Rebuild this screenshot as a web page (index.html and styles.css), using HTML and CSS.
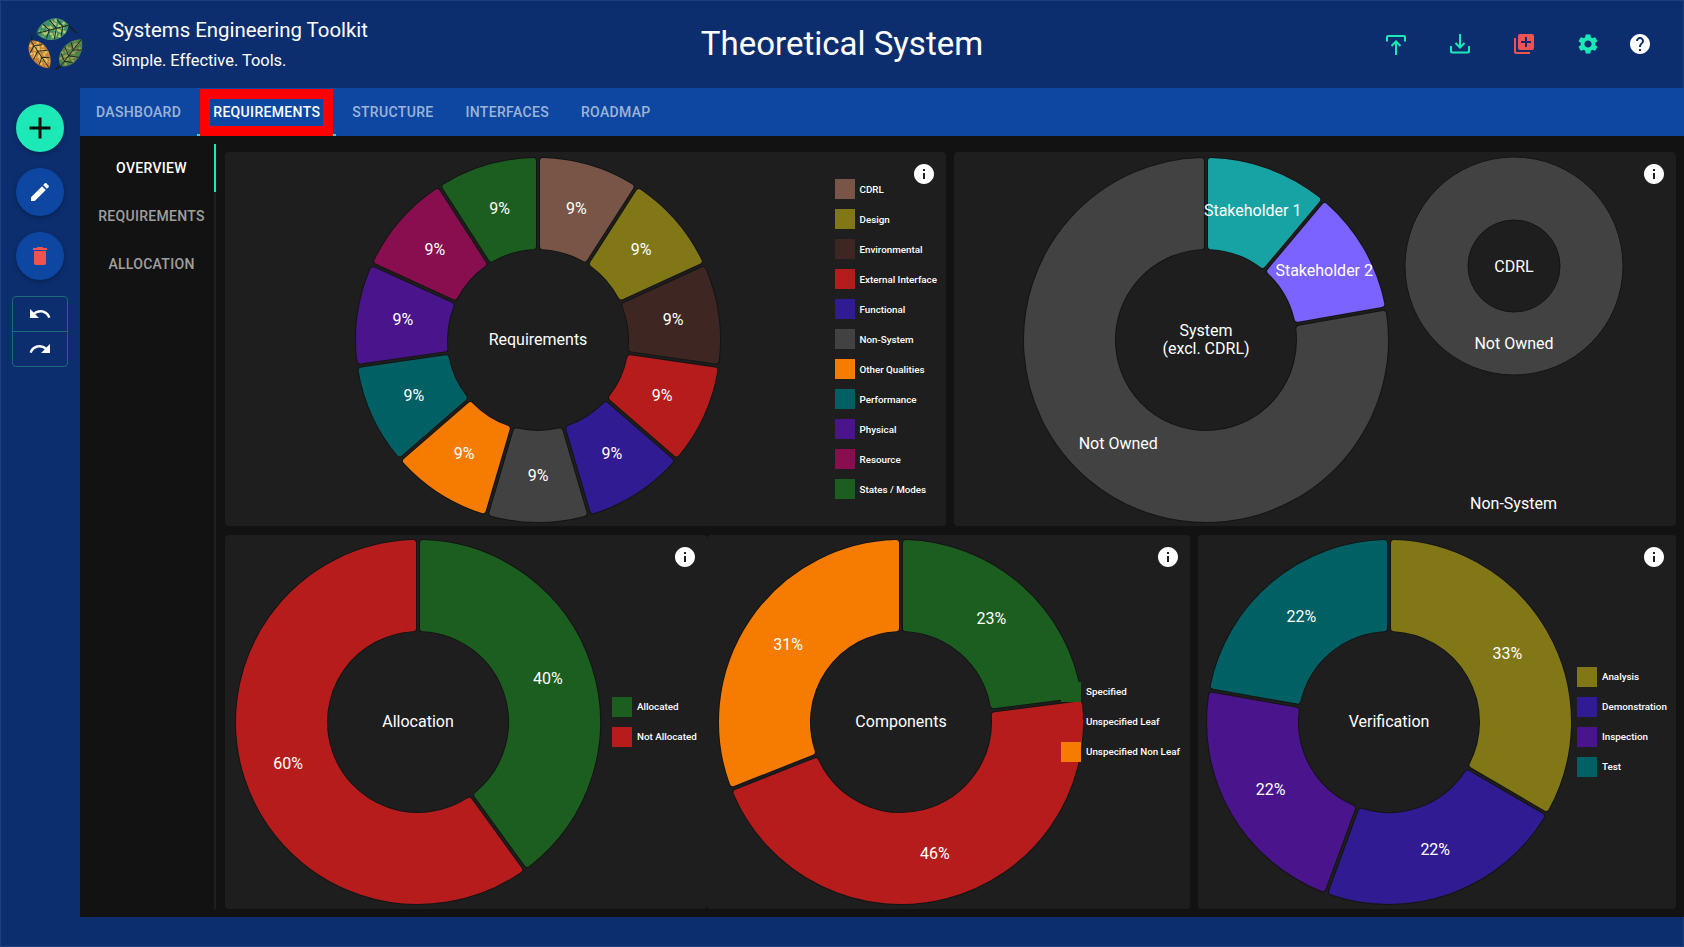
FILE: index.html
```html
<!DOCTYPE html>
<html lang="en">
<head>
  <meta charset="UTF-8" />
  <meta name="viewport" content="width=device-width, initial-scale=1.0" />
  <title>Systems Engineering Toolkit</title>
  <link rel="stylesheet" href="styles.css">
</head>
<body>
<div class="app">

  <header class="top-bar">
    <div class="brand">
      <svg class="logo" viewBox="0 0 270 210" aria-hidden="true">
        <defs>
          <path id="leaf-shape" d="M0 0C16 -42 74 -44 100 0C74 42 16 42 0 0Z" />
          <g id="leaf-detail" fill="none">
            <path d="M14 -18L78 16M30 -26L90 4M10 12L62 -28M30 26L84 -14M16 -6L50 24" stroke="currentColor" stroke-width="8" stroke-dasharray="8 5" />
            <path d="M0 0H100M18 0L30 -26M38 0L52 -30M60 0L74 -22M18 0L30 26M38 0L52 30M60 0L74 22" stroke="#1d2a1c" stroke-width="3" />
          </g>
        </defs>
        <g class="leaf-top">
          <path class="stem" d="M175 45L200 70" />
          <g transform="translate(176 46) rotate(166)">
            <use href="#leaf-shape" />
            <use href="#leaf-detail" />
          </g>
        </g>
        <g class="leaf-left">
          <path class="stem" d="M65 76L65 96" />
          <g transform="translate(62 92) rotate(56) scale(1 .85)">
            <use href="#leaf-shape" />
            <use href="#leaf-detail" />
          </g>
        </g>
        <g class="leaf-right">
          <path class="stem" d="M158 164L136 178" />
          <g transform="translate(152 168) rotate(-52) scale(1.02 .85)">
            <use href="#leaf-shape" />
            <use href="#leaf-detail" />
          </g>
        </g>
      </svg>
      <div class="brand-text">
        <div class="brand-name">Systems Engineering Toolkit</div>
        <div class="brand-tag">Simple. Effective. Tools.</div>
      </div>
    </div>

    <h1 class="page-title">Theoretical System</h1>

    <div class="top-actions">
      <svg class="icon" viewBox="0 0 24 24"><path class="line-teal" d="M3 9.5V5a1 1 0 0 1 1-1h16a1 1 0 0 1 1 1v4.500M12 23V10M7.500 14L12 9.500L16.500 14" /></svg>
      <svg class="icon" viewBox="0 0 24 24"><path class="line-teal" d="M3 14v5.500a1 1 0 0 0 1 1h16a1 1 0 0 0 1-1V14M12 2v13M7.500 11L12 15.500L16.500 11" /></svg>
      <svg class="icon icon-red" viewBox="0 0 24 24"><path d="M4 6H2v14c0 1.100.9 2 2 2h14v-2H4V6zm16-4H8c-1.100 0-2 .9-2 2v12c0 1.100.9 2 2 2h12c1.100 0 2-.9 2-2V4c0-1.100-.9-2-2-2zm-1 9h-4v4h-2v-4H9V9h4V5h2v4h4v2z" /></svg>
      <svg class="icon icon-teal" viewBox="0 0 24 24"><path d="M19.140 12.940c.04-.3.06-.61.06-.94 0-.32-.02-.64-.07-.94l2.030-1.580c.18-.14.23-.41.12-.61l-1.920-3.320c-.12-.22-.37-.29-.59-.22l-2.390.96c-.5-.38-1.030-.7-1.620-.94l-.36-2.540c-.04-.24-.24-.41-.48-.41h-3.840c-.24 0-.43.17-.47.41l-.36 2.540c-.59.24-1.130.57-1.620.94l-2.390-.96c-.22-.08-.47 0-.59.22L2.740 8.870c-.12.21-.08.47.12.61l2.030 1.580c-.05.3-.09.63-.09.94s.02.64.07.94l-2.030 1.580c-.18.14-.23.41-.12.61l1.920 3.320c.12.22.37.29.59.22l2.390-.96c.5.38 1.030.7 1.620.94l.36 2.540c.05.24.24.41.48.41h3.840c.24 0 .44-.17.47-.41l.36-2.540c.59-.24 1.130-.56 1.620-.94l2.390.96c.22.08.47 0 .59-.22l1.920-3.320c.12-.22.07-.47-.12-.61l-2.010-1.580zM12 15.600c-1.980 0-3.600-1.620-3.600-3.600s1.620-3.600 3.600-3.600 3.600 1.620 3.600 3.600-1.620 3.600-3.600 3.600z" /></svg>
      <svg class="icon icon-white help" viewBox="0 0 24 24"><path d="M12 2C6.480 2 2 6.480 2 12s4.480 10 10 10 10-4.480 10-10S17.520 2 12 2zm1 17h-2v-2h2v2zm2.070-7.750l-.9.920C13.450 12.900 13 13.500 13 15h-2v-.5c0-1.100.45-2.100 1.170-2.830l1.240-1.260c.37-.36.59-.86.59-1.410 0-1.100-.9-2-2-2s-2 .9-2 2H8c0-2.210 1.790-4 4-4s4 1.790 4 4c0 .88-.36 1.680-.93 2.250z" /></svg>
    </div>
  </header>

  <div class="workspace">
    <nav class="rail">
      <button class="fab fab-add"><svg viewBox="0 0 24 24"><path d="M19 13h-6v6h-2v-6H5v-2h6V5h2v6h6v2z" /></svg></button>
      <button class="fab"><svg class="icon icon-white" viewBox="0 0 24 24"><path d="M3 17.250V21h3.750L17.810 9.940l-3.750-3.750L3 17.250zM20.710 7.040c.39-.39.39-1.020 0-1.410l-2.340-2.340c-.39-.39-1.020-.39-1.410 0l-1.830 1.830 3.750 3.750 1.830-1.830z" /></svg></button>
      <button class="fab"><svg class="icon icon-red" viewBox="0 0 24 24"><path d="M6 19c0 1.100.9 2 2 2h8c1.100 0 2-.9 2-2V7H6v12zM19 4h-3.500l-1-1h-5l-1 1H5v2h14V4z" /></svg></button>
      <div class="history">
        <button><svg class="icon icon-white" viewBox="0 0 24 24"><path d="M12.500 8c-2.650 0-5.050.99-6.900 2.600L2 7v9h9l-3.620-3.620c1.390-1.160 3.160-1.880 5.120-1.880 3.540 0 6.550 2.310 7.600 5.500l2.370-.78C21.080 11.030 17.150 8 12.500 8z" /></svg></button>
        <button><svg class="icon icon-white" viewBox="0 0 24 24"><path d="M18.400 10.600C16.550 8.990 14.150 8 11.500 8c-4.650 0-8.580 3.030-9.960 7.220L3.900 16c1.050-3.190 4.050-5.500 7.600-5.500 1.950 0 3.730.72 5.120 1.880L13 16h9V7l-3.600 3.600z" /></svg></button>
      </div>
    </nav>

    <main class="content">
      <div class="tabs">
        <a class="tab">Dashboard</a>
        <a class="tab tab-active">Requirements</a>
        <a class="tab">Structure</a>
        <a class="tab">Interfaces</a>
        <a class="tab">Roadmap</a>
      </div>

      <div class="panel">
        <div class="side-tabs">
          <a class="side-tab side-tab-active">Overview</a>
          <a class="side-tab">Requirements</a>
          <a class="side-tab">Allocation</a>
        </div>

        <div class="charts">
          <div class="chart-row row-top">
            <section class="card card-requirements">
              <div class="donut" data-chart="requirements"></div>
              <div class="legend" data-legend="requirements"></div>
              <svg class="info" viewBox="0 0 24 24"><use href="#info-glyph" /></svg>
            </section>

            <section class="card card-ownership">
              <div class="donut" data-chart="system"></div>
              <div class="non-system">
                <div class="donut donut-small" data-chart="cdrl"></div>
                <div class="non-system-label">Non-System</div>
              </div>
              <svg class="info" viewBox="0 0 24 24"><use href="#info-glyph" /></svg>
            </section>
          </div>

          <div class="chart-row row-bottom">
            <section class="card card-allocation">
              <div class="donut" data-chart="allocation"></div>
              <div class="legend" data-legend="allocation"></div>
              <svg class="info" viewBox="0 0 24 24"><use href="#info-glyph" /></svg>
            </section>

            <section class="card card-components">
              <div class="donut" data-chart="components"></div>
              <div class="legend" data-legend="components"></div>
              <svg class="info" viewBox="0 0 24 24"><use href="#info-glyph" /></svg>
            </section>

            <section class="card card-verification">
              <div class="donut" data-chart="verification"></div>
              <div class="legend" data-legend="verification"></div>
              <svg class="info" viewBox="0 0 24 24"><use href="#info-glyph" /></svg>
            </section>
          </div>
        </div>
      </div>
    </main>
  </div>

  <svg class="glyphs" aria-hidden="true">
    <defs>
      <path id="info-glyph" d="M12 2C6.480 2 2 6.480 2 12s4.480 10 10 10 10-4.480 10-10S17.520 2 12 2zm1 15h-2v-6h2v6zm0-8h-2V7h2v2z" />
    </defs>
  </svg>
</div>

<script src="charts.js"></script>
</body>
</html>
```

FILE: styles.css
```css
* {
  box-sizing: border-box;
}

html, body {
  margin: 0;
  height: 100%;
  overflow: hidden;
}

body {
  font-family: Roboto, "Liberation Sans", sans-serif;
  color: #fff;
  background: #0c2e6e;
}

.app {
  height: 947px;
  box-shadow: inset 0 0 0 1px #1c3f80;
}

.glyphs {
  display: none;
}

.icon {
  display: block;
  width: 24px;
  height: 24px;
}

.icon-white { fill: #fff; }
.icon-red { fill: #ef5350; }
.icon-teal { fill: #1de9b6; }

.line-teal {
  fill: none;
  stroke: #1de9b6;
  stroke-width: 2;
}

/* top bar */
.top-bar {
  display: grid;
  grid-template-columns: 1fr auto 1fr;
  align-items: center;
  height: 88px;
}

.brand {
  display: flex;
  align-items: center;
  padding-left: 10px;
}

.logo {
  width: 90px;
  height: 70px;
  margin-top: 2px;
}

.logo .stem {
  fill: none;
  stroke: #16201a;
  stroke-width: 4;
}

.leaf-top { fill: #3f9068; color: #b9c968; }
.leaf-left { fill: #c9803a; color: #e6c860; }
.leaf-right { fill: #4f8048; color: #a09a58; }

.brand-text {
  margin-left: 12px;
  margin-bottom: 1px;
}

.brand-name {
  font-size: 20.4px;
  line-height: 30px;
}

.brand-tag {
  font-size: 16.4px;
  line-height: 24px;
  margin-top: 4px;
}

.page-title {
  margin: 0 0 2px;
  font-size: 33px;
  font-weight: 400;
  white-space: nowrap;
}

.top-actions {
  display: flex;
  justify-content: flex-end;
  gap: 40px;
  padding-right: 32px;
}

.top-actions .help {
  margin-left: -12px;
}

/* left rail */
.workspace {
  display: flex;
}

.rail {
  flex: none;
  width: 80px;
  display: flex;
  flex-direction: column;
  align-items: center;
  gap: 16px;
  padding-top: 16px;
}

.fab {
  width: 48px;
  height: 48px;
  padding: 0;
  border: 0;
  border-radius: 50%;
  display: flex;
  align-items: center;
  justify-content: center;
  background: #0d47a1;
  box-shadow: 0 2px 5px rgba(0, 0, 0, 0.25);
}

.fab-add {
  background: #1de9b6;
  fill: #0c0c0c;
}

.fab-add svg {
  width: 36px;
  height: 36px;
}

.history {
  width: 56px;
  height: 71px;
  border: 1px solid #1b6a78;
  border-radius: 4px;
  display: flex;
  flex-direction: column;
}

.history button {
  flex: 1;
  padding: 0;
  border: 0;
  background: none;
  display: flex;
  align-items: center;
  justify-content: center;
}

.history button + button {
  border-top: 1px solid #1b6a78;
}

/* tabs */
.content {
  flex: 1;
  min-width: 0;
}

.tabs {
  display: flex;
  height: 48px;
  background: #0d47a1;
}

.tab {
  position: relative;
  display: flex;
  align-items: center;
  padding: 0 16px;
  font-size: 14px;
  font-weight: 500;
  letter-spacing: 0.33px;
  text-transform: uppercase;
  color: rgba(255, 255, 255, 0.6);
}

.tab-active {
  color: #fff;
  border-bottom: 2px solid #1de9b6;
  padding-top: 2px;
}

/* red highlight drawn over the active tab */
.tab-active::after {
  content: "";
  position: absolute;
  left: 3px;
  right: 3px;
  top: 1px;
  bottom: -2px;
  border: 10px solid #f00;
}

.panel {
  display: flex;
  height: 781px;
  background: #121212;
}

.side-tabs {
  flex: none;
  width: 136px;
  margin: 8px 0;
  padding-left: 9px;
  border-right: 2px solid #1f1f1f;
}

.side-tab {
  position: relative;
  display: flex;
  align-items: center;
  justify-content: center;
  height: 48px;
  font-size: 14px;
  font-weight: 500;
  letter-spacing: 0.3px;
  text-transform: uppercase;
  color: rgba(255, 255, 255, 0.6);
}

.side-tab-active {
  color: #fff;
}

.side-tab-active::after {
  content: "";
  position: absolute;
  right: -2px;
  top: 0;
  width: 2px;
  height: 100%;
  background: #1de9b6;
}

/* chart cards */
.charts {
  flex: 1;
  min-width: 0;
  display: flex;
  flex-direction: column;
  gap: 9px;
  padding: 16px 8px 8px 9px;
}

.chart-row {
  display: grid;
  height: 374px;
}

.row-top {
  grid-template-columns: 721px 722px;
  gap: 8px;
}

.row-bottom {
  grid-template-columns: 482px 483px 486px;
}

.row-bottom .legend {
  margin-bottom: 1px;
}

.card {
  position: relative;
  display: flex;
  align-items: center;
  background: #1e1e1e;
  border-radius: 4px;
}

.card-verification {
  margin-left: 8px;
}

.info {
  position: absolute;
  top: 10px;
  right: 10px;
  width: 24px;
  height: 24px;
  fill: #fff;
}

.donut {
  flex: none;
  width: 364px;
  height: 364px;
}

.donut svg {
  display: block;
  width: 100%;
  height: 100%;
  overflow: visible;
}

.donut text {
  fill: #fff;
  font-size: 16px;
  text-anchor: middle;
  dominant-baseline: central;
}

.donut-small {
  width: 218px;
  height: 218px;
}

.card-requirements .donut { margin: 1px 0 0 130.5px; }
.card-requirements .legend { margin-left: 115px; }
.card-ownership > .donut { margin: 1px 0 0 69.5px; }
.card-allocation .donut { margin-left: 11px; }
.card-allocation .legend { margin-left: 12px; }
.card-components .donut { margin-left: 11.5px; }
.card-components .legend { margin-left: -21.5px; }
.card-verification .donut { margin-left: 9px; }
.card-verification .legend { margin-left: 6px; }

.non-system {
  align-self: stretch;
  width: 218px;
  margin-left: 17px;
  padding: 5px 0 10px;
  display: flex;
  flex-direction: column;
  justify-content: space-between;
}

.non-system-label {
  font-size: 16px;
  line-height: 24px;
  text-align: center;
}

.legend {
  flex: none;
  display: flex;
  flex-direction: column;
  gap: 10px;
}

.legend-item {
  display: flex;
  align-items: center;
  gap: 5px;
  height: 20px;
  font-size: 9.8px;
  font-weight: 500;
  white-space: nowrap;
}

.swatch {
  width: 20px;
  height: 20px;
}
```

FILE: charts.js
```js
const colors = {
  brown: '#795548',
  olive: '#827717',
  darkBrown: '#3e2723',
  red: '#b71c1c',
  indigo: '#311b92',
  grey: '#424242',
  orange: '#f57c00',
  teal: '#006064',
  purple: '#4a148c',
  pink: '#880e4f',
  green: '#1b5e20',
  cyan: '#17a3a3',
  violet: '#7b63ff'
};

const charts = {
  requirements: {
    center: ['Requirements'],
    percent: true,
    items: [
      ['CDRL', 1, colors.brown],
      ['Design', 1, colors.olive],
      ['Environmental', 1, colors.darkBrown],
      ['External Interface', 1, colors.red],
      ['Functional', 1, colors.indigo],
      ['Non-System', 1, colors.grey],
      ['Other Qualities', 1, colors.orange],
      ['Performance', 1, colors.teal],
      ['Physical', 1, colors.purple],
      ['Resource', 1, colors.pink],
      ['States / Modes', 1, colors.green]
    ]
  },
  system: {
    center: ['System', '(excl. CDRL)'],
    items: [
      ['Stakeholder 1', 1, colors.cyan],
      ['Stakeholder 2', 1, colors.violet],
      ['Not Owned', 7, colors.grey]
    ]
  },
  cdrl: {
    center: ['CDRL'],
    radius: 109,
    inner: 46,
    items: [['Not Owned', 1, colors.grey]]
  },
  allocation: {
    center: ['Allocation'],
    percent: true,
    items: [
      ['Allocated', 40, colors.green],
      ['Not Allocated', 60, colors.red]
    ]
  },
  components: {
    center: ['Components'],
    percent: true,
    items: [
      ['Specified', 23, colors.green],
      ['Unspecified Leaf', 46, colors.red],
      ['Unspecified Non Leaf', 31, colors.orange]
    ]
  },
  verification: {
    center: ['Verification'],
    percent: true,
    items: [
      ['Analysis', 33.4, colors.olive],
      ['Demonstration', 22.2, colors.indigo],
      ['Inspection', 22.2, colors.purple],
      ['Test', 22.2, colors.teal]
    ]
  }
};

const GAP = 4;
const CORNER = 3;
const LINE = 18;

function point(r, angle) {
  return `${(r * Math.sin(angle)).toFixed(2)} ${(-r * Math.cos(angle)).toFixed(2)}`;
}

// slice shrunk by the corner radius; a round stroke grows it back with soft corners
function slicePath(outer, inner, start, end) {
  const ro = outer - CORNER;
  const ri = inner + CORNER;
  const half = GAP / 2 + CORNER;
  const o0 = start + Math.asin(half / ro);
  const o1 = end - Math.asin(half / ro);
  const i0 = start + Math.asin(half / ri);
  const i1 = end - Math.asin(half / ri);
  const large = o1 - o0 > Math.PI ? 1 : 0;
  const largeIn = i1 - i0 > Math.PI ? 1 : 0;
  return `M${point(ro, o0)}A${ro} ${ro} 0 ${large} 1 ${point(ro, o1)}` +
    `L${point(ri, i1)}A${ri} ${ri} 0 ${largeIn} 0 ${point(ri, i0)}Z`;
}

function ringPath(outer, inner) {
  return `M0 ${-outer}A${outer} ${outer} 0 1 1 0 ${outer}A${outer} ${outer} 0 1 1 0 ${-outer}Z` +
    `M0 ${-inner}A${inner} ${inner} 0 1 0 0 ${inner}A${inner} ${inner} 0 1 0 0 ${-inner}Z`;
}

function renderChart(el, chart) {
  const outer = chart.radius || 182;
  const inner = chart.inner || 91;
  const total = chart.items.reduce((sum, item) => sum + item[1], 0);
  const lift = chart.radius ? 0 : 1;
  let angle = 0;
  let shapes = '';
  let labels = '';

  chart.items.forEach(([name, value, color]) => {
    const sweep = value / total * Math.PI * 2;
    const mid = angle + sweep / 2;
    if (chart.items.length === 1) {
      shapes += `<path d="${ringPath(outer, inner)}" fill="${color}" fill-rule="evenodd" stroke="#141414" />`;
    } else {
      const d = slicePath(outer, inner, angle, angle + sweep);
      shapes += `<path d="${d}" fill="none" stroke="#141414" stroke-width="${CORNER * 2 + 2}" stroke-linejoin="round" />`;
      shapes += `<path d="${d}" fill="${color}" stroke="${color}" stroke-width="${CORNER * 2}" stroke-linejoin="round" />`;
    }
    const r = (outer + inner) / 2;
    const text = chart.percent ? `${Math.round(value / total * 100)}%` : name;
    labels += `<text x="${r * Math.sin(mid)}" y="${-r * Math.cos(mid) - lift}">${text}</text>`;
    angle += sweep;
  });

  const top = -(chart.center.length - 1) * LINE / 2;
  chart.center.forEach((line, i) => {
    labels += `<text x="0" y="${top + i * LINE - lift}">${line}</text>`;
  });

  el.innerHTML = `<svg viewBox="${-outer} ${-outer} ${outer * 2} ${outer * 2}">${shapes}${labels}</svg>`;
}

function renderLegend(el, chart) {
  chart.items.forEach(([name, , color]) => {
    const row = document.createElement('div');
    row.className = 'legend-item';
    row.innerHTML = `<span class="swatch" style="background:${color}"></span>${name}`;
    el.appendChild(row);
  });
}

document.querySelectorAll('[data-chart]').forEach(el => renderChart(el, charts[el.dataset.chart]));
document.querySelectorAll('[data-legend]').forEach(el => renderLegend(el, charts[el.dataset.legend]));
```
